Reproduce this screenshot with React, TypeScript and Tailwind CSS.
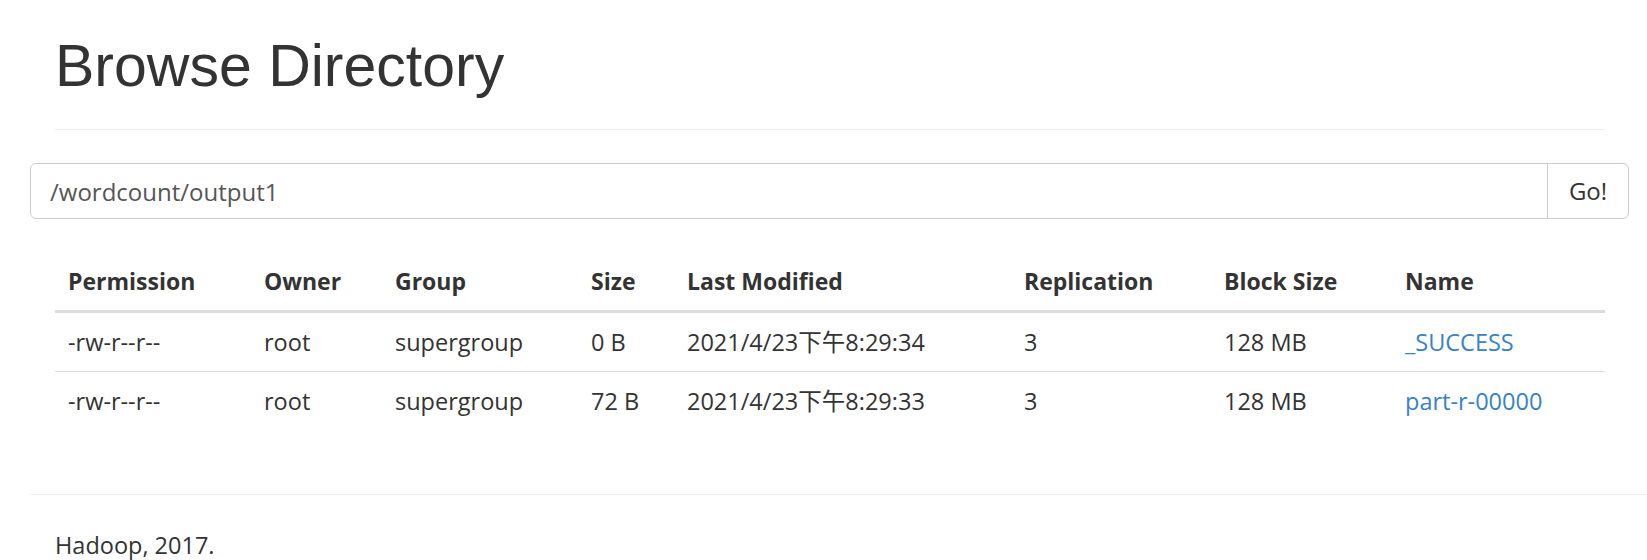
import React from 'react'

type FileRow = {
  permission: string
  owner: string
  group: string
  size: string
  modified: string
  replication: string
  blockSize: string
  name: string
}

const rows: FileRow[] = [
  { permission: '-rw-r--r--', owner: 'root', group: 'supergroup', size: '0 B', modified: '2021/4/23下午8:29:34', replication: '3', blockSize: '128 MB', name: '_SUCCESS' },
  { permission: '-rw-r--r--', owner: 'root', group: 'supergroup', size: '72 B', modified: '2021/4/23下午8:29:33', replication: '3', blockSize: '128 MB', name: 'part-r-00000' },
]

const columns = [
  { label: 'Permission', width: 'w-[196px]' },
  { label: 'Owner', width: 'w-[131px]' },
  { label: 'Group', width: 'w-[196px]' },
  { label: 'Size', width: 'w-[96px]' },
  { label: 'Last Modified', width: 'w-[337px]' },
  { label: 'Replication', width: 'w-[200px]' },
  { label: 'Block Size', width: 'w-[181px]' },
  { label: 'Name', width: 'w-[213px]' },
]

const bodyFont = "font-['Open_Sans','Noto_Sans_CJK_SC',sans-serif]"

export default function App() {
  return (
    <div className={`w-[1647px] h-[560px] overflow-hidden bg-white text-[#333] ${bodyFont} text-[23.5px]`}>
      <div className="pl-[55px] pr-[42px]">
        <div className="border-b border-[#eee] pb-[31px]">
          <h1 className="mt-[35px] font-['Liberation_Sans',Arial,sans-serif] text-[59px] leading-[63px] font-normal">
            Browse Directory
          </h1>
        </div>
      </div>

      <div className="pl-[30px] pr-[18px] mt-[33px]">
        <div className="flex h-[56px]">
          <input
            className="flex-1 min-w-0 h-full border border-[#ccc] rounded-l-[6px] px-[19px] text-[#555] text-[24px] outline-none"
            defaultValue="/wordcount/output1"
          />
          <button className="w-[82px] h-full -ml-px border border-[#ccc] rounded-r-[6px] bg-white text-[#333] text-[24px]">
            Go!
          </button>
        </div>
      </div>

      <div className="pl-[55px] pr-[42px] mt-[33px] mb-[64px]">
        <table className="w-full table-fixed border-collapse">
          <thead>
            <tr>
              {columns.map((c) => (
                <th
                  key={c.label}
                  className={`${c.width} text-left font-bold text-[23px] px-[13px] py-[13px] leading-[32px] border-b-[3px] border-[#ddd]`}
                >
                  {c.label}
                </th>
              ))}
            </tr>
          </thead>
          <tbody>
            {rows.map((r, i) => (
              <tr key={r.name} className={i > 0 ? 'border-t border-[#ddd]' : ''}>
                <td className="px-[13px] py-[13px] leading-[32px]">{r.permission}</td>
                <td className="px-[13px] py-[13px] leading-[32px]">{r.owner}</td>
                <td className="px-[13px] py-[13px] leading-[32px]">{r.group}</td>
                <td className="px-[13px] py-[13px] leading-[32px]">{r.size}</td>
                <td className="px-[13px] py-[13px] leading-[32px] whitespace-nowrap">{r.modified}</td>
                <td className="px-[13px] py-[13px] leading-[32px]">{r.replication}</td>
                <td className="px-[13px] py-[13px] leading-[32px]">{r.blockSize}</td>
                <td className="px-[13px] py-[13px] leading-[32px]">
                  <a href="#" className="text-[#3782c8]">{r.name}</a>
                </td>
              </tr>
            ))}
          </tbody>
        </table>
      </div>

      <div className="ml-[30px] border-t border-[#eee] pt-[34px] pl-[25px] leading-[32px]">
        Hadoop, 2017.
      </div>
    </div>
  )
}
